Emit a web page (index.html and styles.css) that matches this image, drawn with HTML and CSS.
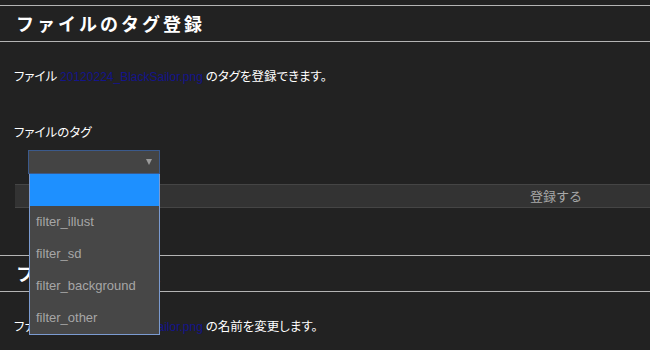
FILE: index.html
```html
<!DOCTYPE html>
<html lang="ja">
<head>
<meta charset="utf-8">
<link rel="stylesheet" href="styles.css">
</head>
<body>
<section class="sec">
  <h2 class="title">ファイルのタグ登録</h2>
  <p class="desc">ファイル <a class="file" href="#">20120224_BlackSailor.png</a> のタグを登録できます。</p>
  <form class="form">
    <div class="label">ファイルのタグ</div>
    <div class="field">
      <div class="select"><span class="arrow"></span></div>
      <ul class="dropdown">
        <li class="opt active">&nbsp;</li>
        <li class="opt">filter_illust</li>
        <li class="opt">filter_sd</li>
        <li class="opt">filter_background</li>
        <li class="opt">filter_other</li>
      </ul>
    </div>
    <div class="submit">登録する</div>
  </form>
</section>
<section class="sec sec2">
  <h2 class="title">ファイル名変更</h2>
  <p class="desc">ファイル <a class="file" href="#">20120224_BlackSailor.png</a> の名前を変更します。</p>
</section>
</body>
</html>
```

FILE: styles.css
```css
html, body {
  margin: 0;
  padding: 0;
  background: #222222;
  overflow: hidden;
  height: 350px;
}
body {
  font-family: "Noto Sans CJK JP", "Liberation Sans", sans-serif;
  color: #ffffff;
  font-size: 12px;
}
.sec {
  padding-top: 5px;
}
.sec2 {
  padding-top: 47px;
}
.title {
  margin: 0;
  height: 35px;
  line-height: 35px;
  border-top: 1px solid #b4b4b4;
  border-bottom: 1px solid #b4b4b4;
  padding-left: 16px;
  font-size: 18px;
  font-weight: bold;
  letter-spacing: 3px;
  color: #ffffff;
}
.desc {
  margin: 25px 0 0 14px;
  line-height: 18px;
  font-size: 12.5px;
  font-feature-settings: "palt";
}
.file {
  color: #14148a;
  text-decoration: none;
  font-family: "Liberation Sans", Arial, sans-serif;
  font-size: 12px;
}
.form {
  margin: 0;
}
.label {
  margin: 37px 0 0 14px;
  line-height: 18px;
  font-size: 12.5px;
  font-feature-settings: "palt";
}
.field {
  position: relative;
  margin: 9px 0 0 28px;
  width: 132px;
}
.select {
  height: 22px;
  border: 1px solid #3b5a8c;
  background: #444444;
  position: relative;
}
.arrow {
  position: absolute;
  right: 7px;
  top: 8px;
  width: 0;
  height: 0;
  border-left: 3.5px solid transparent;
  border-right: 3.5px solid transparent;
  border-top: 6px solid #9a9a9a;
}
.dropdown {
  position: absolute;
  left: 1px;
  top: 24px;
  width: 129px;
  margin: 0;
  padding: 0;
  list-style: none;
  background: #474747;
  border: 1px solid #7b9bd1;
  border-top: none;
  z-index: 5;
}
.opt {
  height: 32px;
  line-height: 32px;
  padding-left: 6px;
  font-family: "Liberation Sans", Arial, sans-serif;
  font-size: 13px;
  color: #a6a6a6;
}
.opt.active {
  background: #1e90ff;
}
.submit {
  margin: 10px 0 0 15px;
  padding-left: 447px;
  height: 22px;
  line-height: 22px;
  background: #333333;
  border-top: 1px solid #454545;
  border-bottom: 1px solid #454545;
  text-align: center;
  color: #a8a8a8;
  font-size: 13px;
}
```
